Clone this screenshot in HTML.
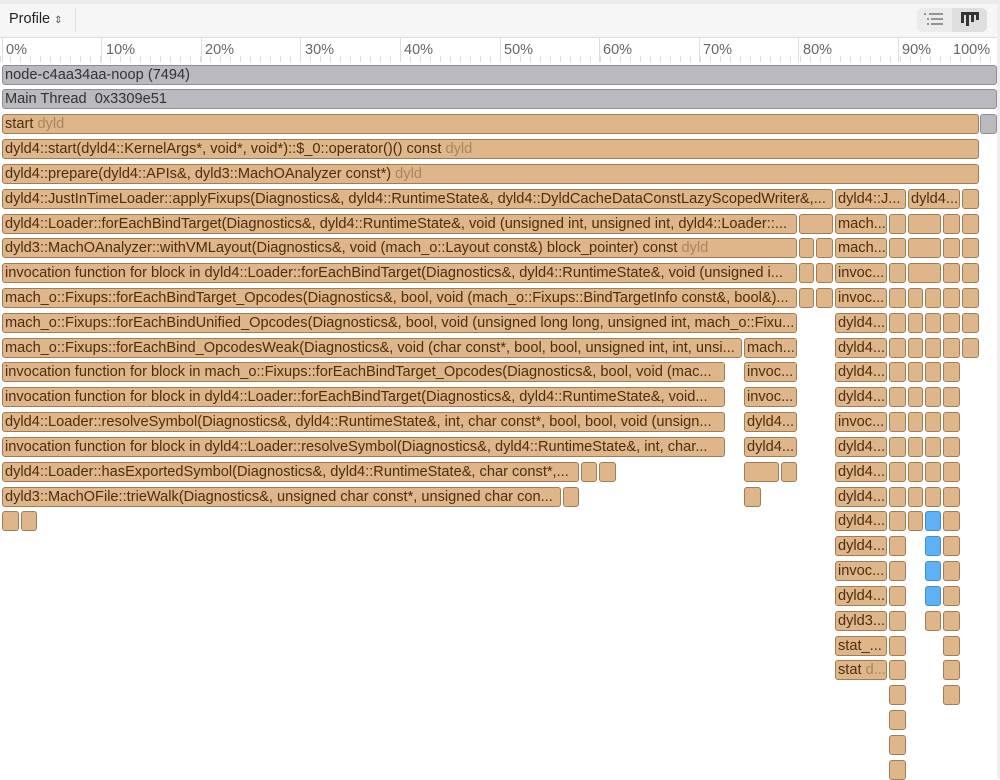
<!DOCTYPE html><html><head><meta charset="utf-8"><style>
body{margin:0;width:1000px;height:779px;overflow:hidden;background:#fff;font-family:"Liberation Sans",sans-serif;position:relative}
.b{position:absolute;height:20px;box-sizing:border-box;border:1px solid #a27c55;border-radius:3px;background:#dfb68a;color:#4b2e0e;font-size:14.6px;line-height:19px;padding-left:2px;white-space:nowrap;overflow:hidden}
.g{background:#b9b9bf;border-color:#8e8e94;color:#333}
.bl{background:#5eb1f5;border-color:#3f8fd6}
.l{color:#a88560}
.tk{position:absolute;top:38px;width:1px;height:24px;background:#ddd}
.lb{position:absolute;top:42px;font-size:14.5px;color:#666}
</style></head><body>
<div style="position:absolute;left:0;top:0;width:1000px;height:4px;background:#ececec;border-bottom:1px solid #ddd"></div>
<div style="position:absolute;left:0;top:4px;width:997px;height:33px;background:#f6f6f6;border-bottom:1px solid #ddd"></div>
<div style="position:absolute;left:9px;top:11px;font-size:14.5px;color:#222">Profile <span style="font-size:10px;color:#555">&#8661;</span></div>
<div style="position:absolute;left:75px;top:8px;width:1px;height:24px;background:#ddd"></div>
<div style="position:absolute;left:917px;top:8px;width:70px;height:24px;background:#ebebeb;border-radius:6px"></div>
<div style="position:absolute;left:952px;top:8px;width:35px;height:24px;background:#dedede;border-radius:0 6px 6px 0"></div>
<svg style="position:absolute;left:924px;top:12px" width="20" height="14"><g stroke="#666" stroke-width="1.3"><line x1="0" y1="2" x2="2" y2="2"/><line x1="5" y1="2" x2="19" y2="2"/><line x1="3" y1="7" x2="5" y2="7"/><line x1="7" y1="7" x2="19" y2="7"/><line x1="3" y1="12" x2="5" y2="12"/><line x1="7" y1="12" x2="19" y2="12"/></g></svg>
<svg style="position:absolute;left:961px;top:12px" width="18" height="14"><g fill="#333"><rect x="0" y="0" width="18" height="3"/><rect x="0" y="3" width="3" height="8"/><rect x="5" y="3" width="3" height="11"/><rect x="10" y="3" width="3" height="7"/><rect x="15" y="3" width="3" height="5"/></g></svg>
<div style="position:absolute;left:997px;top:4px;width:3px;height:775px;background:#eee"></div>
<div style="position:absolute;left:0;top:38px;width:997px;height:24px;background:#fff"></div>
<div style="position:absolute;left:0;top:56px;width:997px;height:6px;background:repeating-linear-gradient(90deg,#ddd 0 1px,transparent 1px 10px)"></div>
<div class="tk" style="left:2px"></div><div class="tk" style="left:101px"></div><div class="tk" style="left:201px"></div><div class="tk" style="left:300px"></div><div class="tk" style="left:400px"></div><div class="tk" style="left:500px"></div><div class="tk" style="left:599px"></div><div class="tk" style="left:699px"></div><div class="tk" style="left:798px"></div><div class="tk" style="left:898px"></div>
<div class="lb" style="left:6px">0%</div><div class="lb" style="left:106px">10%</div><div class="lb" style="left:205px">20%</div><div class="lb" style="left:305px">30%</div><div class="lb" style="left:404px">40%</div><div class="lb" style="left:504px">50%</div><div class="lb" style="left:603px">60%</div><div class="lb" style="left:703px">70%</div><div class="lb" style="left:803px">80%</div><div class="lb" style="left:902px">90%</div><div class="lb" style="left:953px">100%</div>

<div class="b g" style="left:2px;top:65px;width:995px">node-c4aa34aa-noop (7494)</div>
<div class="b g" style="left:2px;top:89px;width:995px">Main Thread&nbsp; 0x3309e51</div>
<div class="b" style="left:2px;top:114px;width:977px">start <span class="l">dyld</span></div><div class="b g" style="left:980px;top:114px;width:17px"></div>
<div class="b" style="left:2px;top:139px;width:977px">dyld4::start(dyld4::KernelArgs*, void*, void*)::$_0::operator()() const <span class="l">dyld</span></div>
<div class="b" style="left:2px;top:164px;width:977px">dyld4::prepare(dyld4::APIs&amp;, dyld3::MachOAnalyzer const*) <span class="l">dyld</span></div>

<div class="b" style="left:2px;top:189px;width:831px">dyld4::JustInTimeLoader::applyFixups(Diagnostics&amp;, dyld4::RuntimeState&amp;, dyld4::DyldCacheDataConstLazyScopedWriter&amp;,...</div>
<div class="b" style="left:835px;top:189px;width:71px">dyld4::J...</div><div class="b" style="left:908px;top:189px;width:52px">dyld4...</div><div class="b" style="left:962px;top:189px;width:17px"></div>

<div class="b" style="left:2px;top:214px;width:795px">dyld4::Loader::forEachBindTarget(Diagnostics&amp;, dyld4::RuntimeState&amp;, void (unsigned int, unsigned int, dyld4::Loader::...</div>
<div class="b" style="left:799px;top:214px;width:34px"></div><div class="b" style="left:835px;top:214px;width:52px">mach...</div><div class="b" style="left:889px;top:214px;width:17px"></div><div class="b" style="left:908px;top:214px;width:33px"></div><div class="b" style="left:943px;top:214px;width:17px"></div><div class="b" style="left:962px;top:214px;width:17px"></div>

<div class="b" style="left:2px;top:238px;width:795px">dyld3::MachOAnalyzer::withVMLayout(Diagnostics&amp;, void (mach_o::Layout const&amp;) block_pointer) const <span class="l">dyld</span></div>
<div class="b" style="left:799px;top:238px;width:15px"></div><div class="b" style="left:816px;top:238px;width:17px"></div><div class="b" style="left:835px;top:238px;width:52px">mach...</div><div class="b" style="left:889px;top:238px;width:17px"></div><div class="b" style="left:908px;top:238px;width:33px"></div><div class="b" style="left:943px;top:238px;width:17px"></div><div class="b" style="left:962px;top:238px;width:17px"></div>

<div class="b" style="left:2px;top:263px;width:795px">invocation function for block in dyld4::Loader::forEachBindTarget(Diagnostics&amp;, dyld4::RuntimeState&amp;, void (unsigned i...</div>
<div class="b" style="left:799px;top:263px;width:15px"></div><div class="b" style="left:816px;top:263px;width:17px"></div><div class="b" style="left:835px;top:263px;width:52px">invoc...</div><div class="b" style="left:889px;top:263px;width:17px"></div><div class="b" style="left:908px;top:263px;width:33px"></div><div class="b" style="left:943px;top:263px;width:17px"></div><div class="b" style="left:962px;top:263px;width:17px"></div>

<div class="b" style="left:2px;top:288px;width:795px">mach_o::Fixups::forEachBindTarget_Opcodes(Diagnostics&amp;, bool, void (mach_o::Fixups::BindTargetInfo const&amp;, bool&amp;)...</div>
<div class="b" style="left:799px;top:288px;width:15px"></div><div class="b" style="left:816px;top:288px;width:17px"></div><div class="b" style="left:835px;top:288px;width:52px">invoc...</div><div class="b" style="left:889px;top:288px;width:17px"></div><div class="b" style="left:908px;top:288px;width:15px"></div><div class="b" style="left:925px;top:288px;width:16px"></div><div class="b" style="left:943px;top:288px;width:17px"></div><div class="b" style="left:962px;top:288px;width:17px"></div>

<div class="b" style="left:2px;top:313px;width:795px">mach_o::Fixups::forEachBindUnified_Opcodes(Diagnostics&amp;, bool, void (unsigned long long, unsigned int, mach_o::Fixu...</div>
<div class="b" style="left:835px;top:313px;width:52px">dyld4...</div><div class="b" style="left:889px;top:313px;width:17px"></div><div class="b" style="left:908px;top:313px;width:15px"></div><div class="b" style="left:925px;top:313px;width:16px"></div><div class="b" style="left:943px;top:313px;width:17px"></div><div class="b" style="left:962px;top:313px;width:17px"></div>

<div class="b" style="left:2px;top:338px;width:740px">mach_o::Fixups::forEachBind_OpcodesWeak(Diagnostics&amp;, void (char const*, bool, bool, unsigned int, int, unsi...</div>
<div class="b" style="left:744px;top:338px;width:53px">mach...</div>
<div class="b" style="left:835px;top:338px;width:52px">dyld4...</div><div class="b" style="left:889px;top:338px;width:17px"></div><div class="b" style="left:908px;top:338px;width:15px"></div><div class="b" style="left:925px;top:338px;width:16px"></div><div class="b" style="left:943px;top:338px;width:17px"></div><div class="b" style="left:962px;top:338px;width:17px"></div>

<div class="b" style="left:2px;top:362px;width:723px">invocation function for block in mach_o::Fixups::forEachBindTarget_Opcodes(Diagnostics&amp;, bool, void (mac...</div>
<div class="b" style="left:744px;top:362px;width:53px">invoc...</div>
<div class="b" style="left:835px;top:362px;width:52px">dyld4...</div><div class="b" style="left:889px;top:362px;width:17px"></div><div class="b" style="left:908px;top:362px;width:15px"></div><div class="b" style="left:925px;top:362px;width:16px"></div><div class="b" style="left:943px;top:362px;width:17px"></div>

<div class="b" style="left:2px;top:387px;width:723px">invocation function for block in dyld4::Loader::forEachBindTarget(Diagnostics&amp;, dyld4::RuntimeState&amp;, void...</div>
<div class="b" style="left:744px;top:387px;width:53px">invoc...</div>
<div class="b" style="left:835px;top:387px;width:52px">dyld4...</div><div class="b" style="left:889px;top:387px;width:17px"></div><div class="b" style="left:908px;top:387px;width:15px"></div><div class="b" style="left:925px;top:387px;width:16px"></div><div class="b" style="left:943px;top:387px;width:17px"></div>

<div class="b" style="left:2px;top:412px;width:723px">dyld4::Loader::resolveSymbol(Diagnostics&amp;, dyld4::RuntimeState&amp;, int, char const*, bool, bool, void (unsign...</div>
<div class="b" style="left:744px;top:412px;width:53px">dyld4...</div>
<div class="b" style="left:835px;top:412px;width:52px">invoc...</div><div class="b" style="left:889px;top:412px;width:17px"></div><div class="b" style="left:908px;top:412px;width:15px"></div><div class="b" style="left:925px;top:412px;width:16px"></div><div class="b" style="left:943px;top:412px;width:17px"></div>

<div class="b" style="left:2px;top:437px;width:723px">invocation function for block in dyld4::Loader::resolveSymbol(Diagnostics&amp;, dyld4::RuntimeState&amp;, int, char...</div>
<div class="b" style="left:744px;top:437px;width:53px">dyld4...</div>
<div class="b" style="left:835px;top:437px;width:52px">dyld4...</div><div class="b" style="left:889px;top:437px;width:17px"></div><div class="b" style="left:908px;top:437px;width:15px"></div><div class="b" style="left:925px;top:437px;width:16px"></div><div class="b" style="left:943px;top:437px;width:17px"></div>

<div class="b" style="left:2px;top:462px;width:577px">dyld4::Loader::hasExportedSymbol(Diagnostics&amp;, dyld4::RuntimeState&amp;, char const*,...</div>
<div class="b" style="left:581px;top:462px;width:16px"></div><div class="b" style="left:599px;top:462px;width:17px"></div>
<div class="b" style="left:744px;top:462px;width:35px"></div><div class="b" style="left:781px;top:462px;width:16px"></div>
<div class="b" style="left:835px;top:462px;width:52px">dyld4...</div><div class="b" style="left:889px;top:462px;width:17px"></div><div class="b" style="left:908px;top:462px;width:15px"></div><div class="b" style="left:925px;top:462px;width:16px"></div><div class="b" style="left:943px;top:462px;width:17px"></div>

<div class="b" style="left:2px;top:487px;width:559px">dyld3::MachOFile::trieWalk(Diagnostics&amp;, unsigned char const*, unsigned char con...</div>
<div class="b" style="left:563px;top:487px;width:16px"></div>
<div class="b" style="left:744px;top:487px;width:17px"></div>
<div class="b" style="left:835px;top:487px;width:52px">dyld4...</div><div class="b" style="left:889px;top:487px;width:17px"></div><div class="b" style="left:908px;top:487px;width:15px"></div><div class="b" style="left:925px;top:487px;width:16px"></div><div class="b" style="left:943px;top:487px;width:17px"></div>

<div class="b" style="left:2px;top:511px;width:17px"></div><div class="b" style="left:21px;top:511px;width:16px"></div>
<div class="b" style="left:835px;top:511px;width:52px">dyld4...</div><div class="b" style="left:889px;top:511px;width:17px"></div><div class="b" style="left:908px;top:511px;width:15px"></div><div class="b bl" style="left:925px;top:511px;width:16px"></div><div class="b" style="left:943px;top:511px;width:17px"></div>

<div class="b" style="left:835px;top:536px;width:52px">dyld4...</div><div class="b" style="left:889px;top:536px;width:17px"></div><div class="b bl" style="left:925px;top:536px;width:16px"></div><div class="b" style="left:943px;top:536px;width:17px"></div>
<div class="b" style="left:835px;top:561px;width:52px">invoc...</div><div class="b" style="left:889px;top:561px;width:17px"></div><div class="b bl" style="left:925px;top:561px;width:16px"></div><div class="b" style="left:943px;top:561px;width:17px"></div>
<div class="b" style="left:835px;top:586px;width:52px">dyld4...</div><div class="b" style="left:889px;top:586px;width:17px"></div><div class="b bl" style="left:925px;top:586px;width:16px"></div><div class="b" style="left:943px;top:586px;width:17px"></div>
<div class="b" style="left:835px;top:611px;width:52px">dyld3...</div><div class="b" style="left:889px;top:611px;width:17px"></div><div class="b" style="left:925px;top:611px;width:16px"></div><div class="b" style="left:943px;top:611px;width:17px"></div>
<div class="b" style="left:835px;top:636px;width:52px">stat_...</div><div class="b" style="left:889px;top:636px;width:17px"></div><div class="b" style="left:943px;top:636px;width:17px"></div>
<div class="b" style="left:835px;top:660px;width:52px">stat <span class="l">d...</span></div><div class="b" style="left:889px;top:660px;width:17px"></div><div class="b" style="left:943px;top:660px;width:17px"></div>
<div class="b" style="left:889px;top:685px;width:17px"></div><div class="b" style="left:943px;top:685px;width:17px"></div>
<div class="b" style="left:889px;top:710px;width:17px"></div>
<div class="b" style="left:889px;top:735px;width:17px"></div>
<div class="b" style="left:889px;top:760px;width:17px"></div>
</body></html>
